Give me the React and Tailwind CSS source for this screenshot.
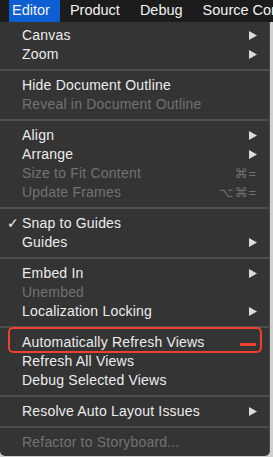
import React from 'react';

const FONT = { fontFamily: '"Liberation Sans", "DejaVu Sans", Arial, sans-serif' };

const sections = [
  [
    { label: 'Canvas', submenu: true },
    { label: 'Zoom', submenu: true },
  ],
  [
    { label: 'Hide Document Outline' },
    { label: 'Reveal in Document Outline', disabled: true },
  ],
  [
    { label: 'Align', submenu: true },
    { label: 'Arrange', submenu: true },
    { label: 'Size to Fit Content', disabled: true, shortcut: '⌘=' },
    { label: 'Update Frames', disabled: true, shortcut: '⌥⌘=' },
  ],
  [
    { label: 'Snap to Guides', checked: true },
    { label: 'Guides', submenu: true },
  ],
  [
    { label: 'Embed In', submenu: true },
    { label: 'Unembed', disabled: true },
    { label: 'Localization Locking', submenu: true },
  ],
  [
    { label: 'Automatically Refresh Views', marked: true },
    { label: 'Refresh All Views' },
    { label: 'Debug Selected Views' },
  ],
  [{ label: 'Resolve Auto Layout Issues', submenu: true }],
  [{ label: 'Refactor to Storyboard...', disabled: true }],
];

function Arrow() {
  return (
    <svg width="8" height="9" viewBox="0 0 8 9" className="shrink-0">
      <polygon points="0,0 8,4.5 0,9" fill="#dcdcdc" />
    </svg>
  );
}

function MenuItem({ item }) {
  return (
    <div className="relative flex h-[19px] items-center pl-[22px] pr-[12px]">
      {item.checked && (
        <span className="absolute left-[7px] top-0 text-[14px] leading-[19px] text-[#ececec]">✓</span>
      )}
      <span
        className={`flex-1 whitespace-nowrap text-[14px] leading-[19px] tracking-[0.2px] ${
          item.disabled ? 'text-[#727272]' : 'text-[#ececec]'
        }`}
      >
        {item.label}
      </span>
      {item.submenu && <Arrow />}
      {item.shortcut && (
        <span className="pr-[-2px] text-[13px] leading-[19px] tracking-[1px] text-[#727272]">
          {item.shortcut}
        </span>
      )}
      {item.marked && (
        <>
          <div className="absolute left-[8px] right-[7px] top-[-6px] h-[26px] rounded-[5px] border-2 border-[#f0402a]" />
          <div className="absolute right-[13px] top-[10px] h-[3px] w-[16px] bg-[#f0402a]" />
        </>
      )}
    </div>
  );
}

export default function App() {
  return (
    <div className="h-[457px] w-[273px] overflow-hidden bg-[#cfcfcf]" style={FONT}>
      <div className="flex h-[22px] items-center bg-[#1c1c1c] text-[14.5px] text-[#f2f2f2]">
        <div className="ml-[9px] flex h-full items-center bg-[#0b5fd3] pl-[3px] pr-[10px]">Editor</div>
        <div className="px-[10px]">Product</div>
        <div className="px-[10px]">Debug</div>
        <div className="whitespace-nowrap px-[10px]">Source Control</div>
      </div>
      <div className="w-[270px] rounded-b-[5px] border-r border-[#4a4a4a] bg-[#343434] py-[4px]">
        {sections.map((section, i) => (
          <div key={i}>
            {i > 0 && (
              <div className="flex h-[12px] items-center">
                <div className="h-[2px] w-full bg-[#4e4e4e]" />
              </div>
            )}
            {section.map((item) => (
              <MenuItem key={item.label} item={item} />
            ))}
          </div>
        ))}
      </div>
    </div>
  );
}
